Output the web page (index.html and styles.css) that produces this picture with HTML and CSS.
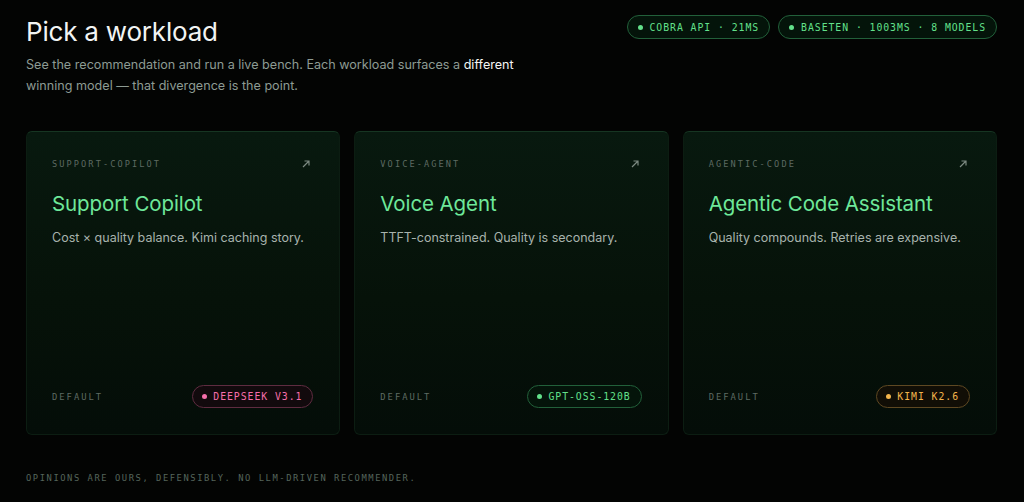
FILE: index.html
```html
<!DOCTYPE html>
<html lang="en">
<head>
<meta charset="utf-8">
<title>Pick a workload</title>
<link rel="stylesheet" href="styles.css">
</head>
<body>
<main class="page">
  <header class="head">
    <div class="intro">
      <h1 class="title">Pick a workload</h1>
      <p class="lede">See the recommendation and run a live bench. Each workload surfaces a <strong>different</strong> winning model — that divergence is the point.</p>
    </div>
    <div class="status">
      <span class="pill pill-green"><i class="dot"></i>Cobra API · 21ms</span>
      <span class="pill pill-green"><i class="dot"></i>Baseten · 1003ms · 8 models</span>
    </div>
  </header>

  <section class="cards">
    <article class="card">
      <div class="card-top">
        <span class="slug">support-copilot</span>
        <svg class="arrow" viewBox="0 0 10 10" width="10" height="10"><path d="M2 8 L8 2 M3.5 2 H8 V6.5" fill="none" stroke="currentColor" stroke-width="1.2"/></svg>
      </div>
      <h2 class="card-title">Support Copilot</h2>
      <p class="card-desc">Cost × quality balance. Kimi caching story.</p>
      <div class="card-foot">
        <span class="default">Default</span>
        <span class="pill pill-pink"><i class="dot"></i>DeepSeek V3.1</span>
      </div>
    </article>

    <article class="card">
      <div class="card-top">
        <span class="slug">voice-agent</span>
        <svg class="arrow" viewBox="0 0 10 10" width="10" height="10"><path d="M2 8 L8 2 M3.5 2 H8 V6.5" fill="none" stroke="currentColor" stroke-width="1.2"/></svg>
      </div>
      <h2 class="card-title">Voice Agent</h2>
      <p class="card-desc">TTFT-constrained. Quality is secondary.</p>
      <div class="card-foot">
        <span class="default">Default</span>
        <span class="pill pill-green"><i class="dot"></i>GPT-OSS-120B</span>
      </div>
    </article>

    <article class="card">
      <div class="card-top">
        <span class="slug">agentic-code</span>
        <svg class="arrow" viewBox="0 0 10 10" width="10" height="10"><path d="M2 8 L8 2 M3.5 2 H8 V6.5" fill="none" stroke="currentColor" stroke-width="1.2"/></svg>
      </div>
      <h2 class="card-title">Agentic Code Assistant</h2>
      <p class="card-desc">Quality compounds. Retries are expensive.</p>
      <div class="card-foot">
        <span class="default">Default</span>
        <span class="pill pill-amber"><i class="dot"></i>Kimi K2.6</span>
      </div>
    </article>
  </section>

  <footer class="note">Opinions are ours, defensibly. No LLM-driven recommender.</footer>
</main>
</body>
</html>
```

FILE: styles.css
```css
* { box-sizing: border-box; }

html, body {
  margin: 0;
  background: #030403;
  color: #e8ece9;
  font-family: Inter, "Noto Sans", sans-serif;
}

.page {
  padding: 14px 27px 0 26px;
  height: 502px;
  overflow: hidden;
}

.head {
  display: flex;
  justify-content: space-between;
  align-items: flex-start;
}

.title {
  margin: 0;
  font-size: 26px;
  font-weight: 400;
  line-height: 36px;
  letter-spacing: -0.2px;
  color: #f2f4f3;
}

.lede {
  margin: 4px 0 0;
  width: 500px;
  font-size: 12.6px;
  line-height: 21px;
  color: #8d9b93;
}

.lede strong {
  font-weight: 400;
  color: #f4f6f5;
}

.status {
  display: flex;
  gap: 8px;
  margin-top: 1px;
}

.pill {
  display: inline-flex;
  align-items: center;
  gap: 7px;
  height: 24px;
  padding: 0 10px 0 10px;
  border-radius: 12px;
  border: 1px solid;
  font-family: "DejaVu Sans Mono", "Liberation Mono", monospace;
  font-size: 9.8px;
  letter-spacing: 0.95px;
  text-transform: uppercase;
  white-space: nowrap;
}

.dot {
  width: 5px;
  height: 5px;
  border-radius: 50%;
  background: currentColor;
  flex: none;
}

.pill-green {
  color: #62e08a;
  border-color: #22603a;
  background: #04140a;
}

.pill-pink {
  color: #f66fab;
  border-color: #5e2c40;
  background: #120a0d;
}

.pill-amber {
  color: #f3b54c;
  border-color: #5e4822;
  background: #110e06;
}

.cards {
  display: grid;
  grid-template-columns: repeat(3, 1fr);
  gap: 14px;
  margin-top: 35px;
}

.card {
  display: flex;
  flex-direction: column;
  height: 304px;
  padding: 26px 26px 26px 25px;
  border-radius: 6px;
  border: 1px solid #0c1d12;
  border-top-color: #163522;
  background: linear-gradient(180deg, #08190f 0%, #061209 55%, #040d08 100%);
}

.card-top {
  display: flex;
  justify-content: space-between;
  align-items: center;
  height: 12px;
}

.slug {
  font-family: "DejaVu Sans Mono", "Liberation Mono", monospace;
  font-size: 8.6px;
  letter-spacing: 2.1px;
  text-transform: uppercase;
  color: #5d6a62;
}

.arrow {
  color: #7d8a82;
  margin-right: 2px;
}

.card-title {
  margin: 21px 0 0;
  font-size: 20.5px;
  font-weight: 400;
  line-height: 26px;
  color: #6ee89a;
  letter-spacing: -0.1px;
}

.card-desc {
  margin: 12px 0 0;
  font-size: 12.5px;
  line-height: 18px;
  color: #a8b3ad;
}

.card-foot {
  margin-top: auto;
  display: flex;
  justify-content: space-between;
  align-items: center;
}

.card-foot .pill {
  height: 23px;
  gap: 6px;
  padding: 0 10px 0 9px;
}

.default {
  font-family: "DejaVu Sans Mono", "Liberation Mono", monospace;
  font-size: 8.8px;
  letter-spacing: 2px;
  text-transform: uppercase;
  color: #5d6a62;
}

.note {
  margin-top: 38px;
  font-family: "DejaVu Sans Mono", "Liberation Mono", monospace;
  font-size: 8.8px;
  letter-spacing: 1.55px;
  text-transform: uppercase;
  color: #55645b;
}
```
